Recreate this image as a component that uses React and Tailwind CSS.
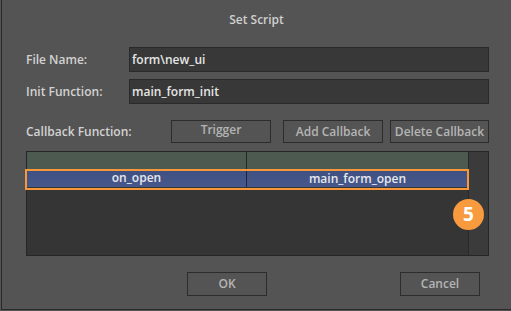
import React from "react";

const font = { fontFamily: '"Open Sans", "Noto Sans", sans-serif' };

function Btn({ children, className = "" }) {
  return (
    <div
      className={
        "flex items-center justify-center border border-[#2c2c2c] text-[12px] font-semibold text-[#b4b4b4] " +
        className
      }
    >
      {children}
    </div>
  );
}

export default function App() {
  return (
    <div className="w-[511px] h-[311px] bg-[#545454] pl-px pb-px" style={font}>
      <div className="relative w-[510px] h-[310px] border-l border-b border-[#2a2a2a] flex flex-col">
        <div className="h-[38px] flex items-center justify-center pt-px text-[12px] font-semibold text-[#cfcfcf]">
          Set Script
        </div>

        <div className="mt-[9px] flex items-center h-[25px]">
          <div className="w-[103px] pl-[24px] text-[12px] font-semibold text-[#d2d2d2]">File Name:</div>
          <div className="w-[360px] h-[25px] ml-[24px] bg-[#383838] border border-[#2a2a2a] flex items-center pl-[2px] text-[12px] font-semibold text-[#e6e6e6]">
            form\new_ui
          </div>
        </div>

        <div className="mt-[7px] flex items-center h-[25px]">
          <div className="w-[103px] pl-[24px] text-[12px] font-semibold text-[#d2d2d2] whitespace-nowrap">Init Function:</div>
          <div className="w-[360px] h-[25px] ml-[24px] bg-[#383838] border border-[#2a2a2a] flex items-center pl-[2px] text-[12px] font-semibold text-[#e6e6e6]">
            main_form_init
          </div>
        </div>

        <div className="mt-[16px] flex items-center h-[23px]">
          <div className="w-[145px] pl-[24px] text-[12px] font-semibold text-[#d2d2d2] whitespace-nowrap">Callback Function:</div>
          <Btn className="w-[100px] h-[23px] ml-[24px] pb-[3px]">Trigger</Btn>
          <Btn className="w-[100px] h-[23px] ml-[12px]">Add Callback</Btn>
          <Btn className="w-[99px] h-[23px] ml-[7px] whitespace-nowrap">Delete Callback</Btn>
        </div>

        <div className="mt-[8px] ml-[24px] w-[463px] h-[105px] border border-[#262626] bg-[#353535] flex">
          <div className="w-[441px] flex flex-col">
            <div className="h-[17px] flex bg-[#4c5a50]">
              <div className="w-[220px] border-r border-[#262626]" />
              <div className="flex-1" />
            </div>
            <div className="h-[18px] flex bg-gradient-to-b from-[#3e5080] to-[#47598c] text-[12px] font-semibold text-[#e8e8ee]">
              <div className="w-[220px] border-r border-[#1e2436] flex items-center justify-center leading-none">on_open</div>
              <div className="flex-1 flex items-center justify-center leading-none pt-[2px]">main_form_open</div>
            </div>
          </div>
          <div className="flex-1 bg-[#3b3b3b] border-l border-[#2a2a2a]" />
        </div>

        <div className="mt-[16px] flex h-[24px]">
          <Btn className="w-[80px] h-[24px] ml-[185px]">OK</Btn>
          <Btn className="w-[80px] h-[24px] ml-[133px]">Cancel</Btn>
        </div>

        <div className="absolute left-[23px] top-[169px] w-[444px] h-[21px] border-2 border-[#f7973a]" />
        <div className="absolute left-[451px] top-[199px] w-[31px] h-[31px] rounded-full bg-[#f89a3e] flex items-center justify-center text-[19px] font-bold text-white leading-none">
          5
        </div>
      </div>
    </div>
  );
}
